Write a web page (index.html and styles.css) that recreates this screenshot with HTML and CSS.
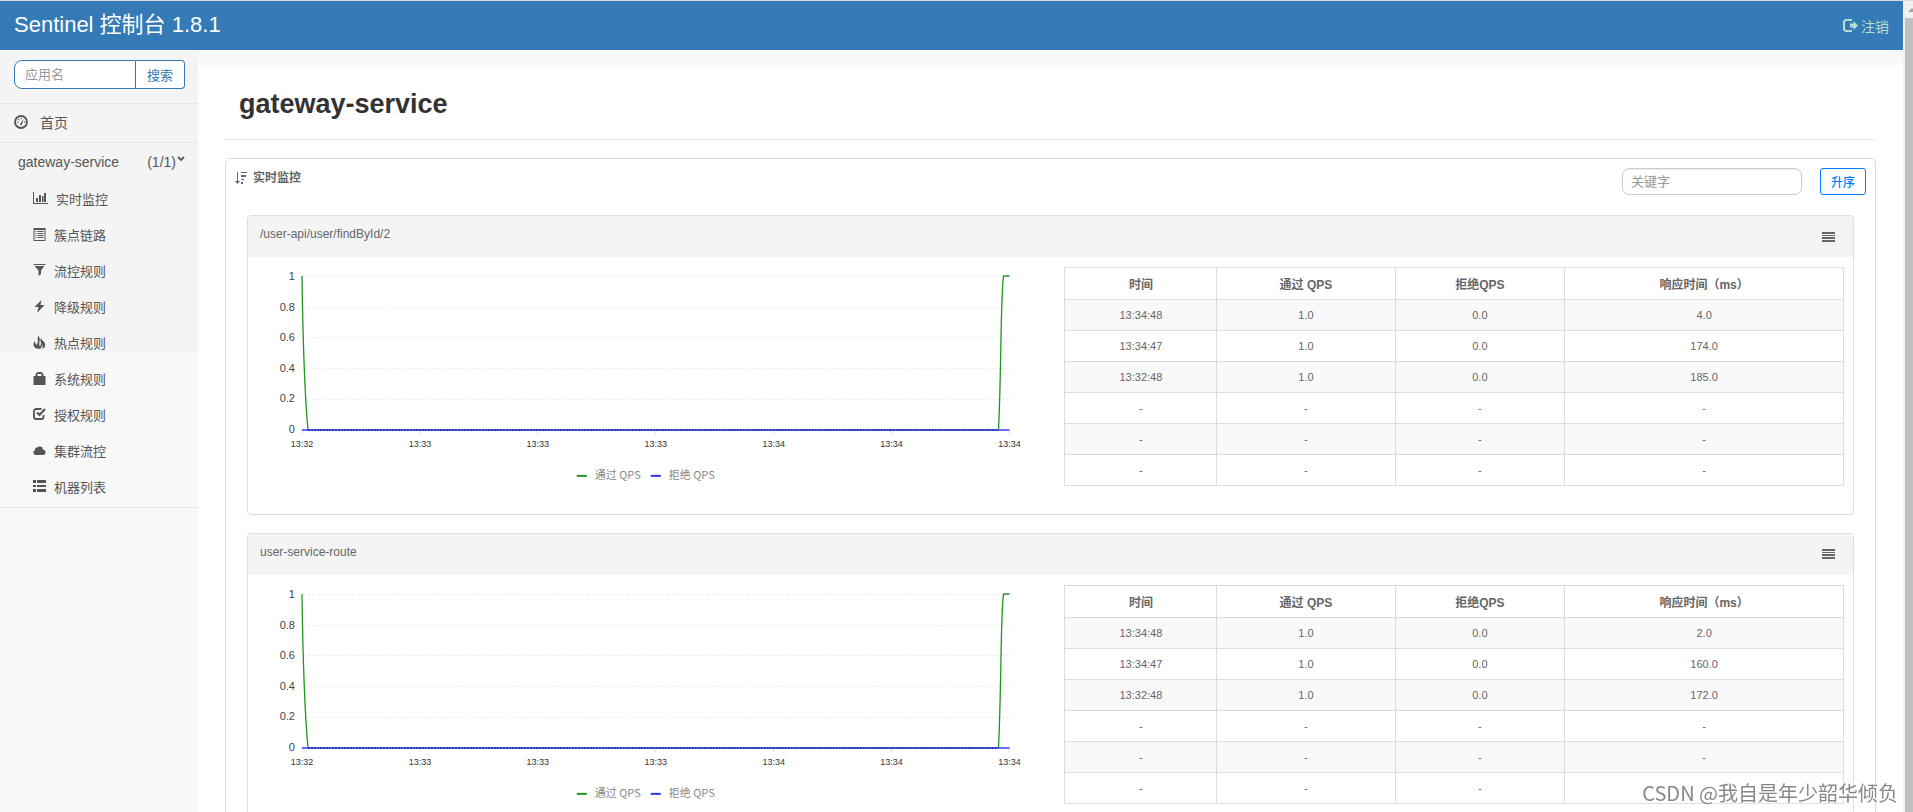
FILE: index.html
```html
<!DOCTYPE html>
<html lang="zh-CN">
<head>
<meta charset="utf-8">
<title>Sentinel 控制台</title>
<link rel="stylesheet" href="styles.css">
</head>
<body>
<svg class="defs" aria-hidden="true">
  <defs>
    <symbol id="i-dash" viewBox="0 0 14 14"><circle cx="7" cy="7" r="6" fill="none" stroke="currentColor" stroke-width="1.8"/><path d="M6 9 9.600 4 8 9.500a1 1 0 1 1-2-.5zM3 6.500h1.200v1.200H3zM4 4h1.200v1.200H4zM6.400 3h1.200v1.200H6.400zM10 6.500h1.200v1.200H10z" fill="currentColor"/></symbol>
    <symbol id="i-chart" viewBox="0 0 15 12"><path d="M0 0h1v11h14v1H0zM3 6h2v4H3zM6 3h2v7H6zM9 4h1.500v6H9zM11 1h2v9h-2z" fill="currentColor"/></symbol>
    <symbol id="i-list" viewBox="0 0 12 13"><path fill-rule="evenodd" d="M0 0h12v13H0zM1 2v10h10V2zM2 3h1v1H2zM4 3h6v1H4zM2 5h1v1H2zM4 5h6v1H4zM2 7h1v1H2zM4 7h6v1H4zM2 9h1v1H2zM4 9h6v1H4z" fill="currentColor"/></symbol>
    <symbol id="i-filter" viewBox="0 0 12 12"><path d="M0 0h12v1H0zM1 2h10L7.500 6.500V10L5 12V6.500z" fill="currentColor"/></symbol>
    <symbol id="i-flash" viewBox="0 0 10 13"><path d="M7 0 0 7h4L2.500 13 10 5H6z" fill="currentColor"/></symbol>
    <symbol id="i-fire" viewBox="0 0 12 13"><path d="M5 0c1.500 1.500 1.500 3.500 1 5.500-.4 2-.5 3.500.5 5C7.300 8.500 8 7.500 7 5c-.4-1.200 0-2.200.5-3 .3 1.800 1.500 2.200 2.700 3.500C12.500 8 12.300 12 8.500 12.800c.8-1.600 1-3 .3-4.300-.2 2-1.300 3-1.800 4.300H4C1.500 12.200 0 10.500 0 8.500 0 7 .6 6 1.300 5c.2 1.800.8 2.800 1.700 4 1.200-1.700 1.500-3 1.200-5C4 2.500 4.200 1 5 0z" fill="currentColor"/></symbol>
    <symbol id="i-bag" viewBox="0 0 12 13"><path fill-rule="evenodd" d="M2 4V2l2-2h4l2 2v2h2v9H0V4zM4 4h4V2H4z" fill="currentColor"/></symbol>
    <symbol id="i-check" viewBox="0 0 13 12"><path d="M8.500 1H3a2 2 0 0 0-2 2v6a2 2 0 0 0 2 2h5.500a2 2 0 0 0 2-2V7" fill="none" stroke="currentColor" stroke-width="1.800"/><path d="M4 4.500 6.500 7 12 1" fill="none" stroke="currentColor" stroke-width="2.200"/></symbol>
    <symbol id="i-cloud" viewBox="0 0 13 9"><path d="M2.500 9A2.500 2.500 0 0 1 2 4.200 2.300 2.300 0 0 1 4 1.500a3.500 3.500 0 0 1 6 2A2.800 2.800 0 0 1 10.500 9z" fill="currentColor"/></symbol>
    <symbol id="i-th" viewBox="0 0 13 12"><path d="M0 0h3v3H0zM4 0h9v3H4zM0 5h3v2H0zM4 5h9v2H4zM0 9h3v3H0zM4 9h9v3H4z" fill="currentColor"/></symbol>
    <symbol id="i-out" viewBox="0 0 15 13"><path d="M9 1H2.500L1 2.500v8L2.500 12H9" fill="none" stroke="currentColor" stroke-width="2"/><path d="M7 4.500h3.500V2L15 6.500 10.500 11V8.500H7z" fill="currentColor"/></symbol>
    <symbol id="i-sort" viewBox="0 0 12 12"><path d="M2 0h1v9h2l-2.500 3L0 9h2zM6 0h6v1H6zM6 3h5v2H6zM6 7h3v1H6zM6 10h2v2H6z" fill="currentColor"/></symbol>
    <symbol id="i-bars" viewBox="0 0 13 10"><path d="M0 0h13v2H0zM0 3h13v1H0zM0 5h13v2H0zM0 8h13v2H0z" fill="currentColor"/></symbol>
    <g id="grid">
      <path d="M44 9.500H753M44 40.500H753M44 70.500H753M44 101.500H753M44 132.500H753" class="grid-line"/>
      <path d="M44 163v4M162 163v4M280 163v4M398 163v4M516 163v4M634 163v4M752 163v4" class="tick"/>
      <path d="M44 9C45 80 46 120 50 163H741C744 100 743 30 746 9H752" class="pass"/>
      <path d="M44 163H752" class="block-line"/>
      <path d="M50 163H741" class="points"/>
      <g class="y-text">
        <text x="37" y="13">1</text><text x="37" y="44">0.8</text><text x="37" y="74">0.6</text><text x="37" y="105">0.4</text><text x="37" y="135">0.2</text><text x="37" y="166">0</text>
      </g>
      <g class="x-text">
        <text x="44" y="180">13:32</text><text x="162" y="180">13:33</text><text x="280" y="180">13:33</text><text x="398" y="180">13:33</text><text x="516" y="180">13:34</text><text x="634" y="180">13:34</text><text x="752" y="180">13:34</text>
      </g>
      <path d="M319 209h10" class="key-pass"/><path d="M393 209h10" class="key-block"/>
      <g class="legend"><text x="337" y="212">通过 QPS</text><text x="411" y="212">拒绝 QPS</text></g>
    </g>
  </defs>
</svg>
<div class="window">
  <div class="app">
    <header class="topbar">
      <a class="brand" href="#">Sentinel 控制台 1.8.1</a>
      <a class="logout" href="#"><svg width="15" height="13"><use href="#i-out"/></svg>注销</a>
    </header>
    <div class="columns">
      <nav class="sidebar">
        <div class="sidebar-top">
          <form class="search">
            <input type="text" placeholder="应用名" aria-label="应用名">
            <button type="button">搜索</button>
          </form>
          <a class="home" href="#"><svg width="14" height="14"><use href="#i-dash"/></svg>首页</a>
          <a class="service" href="#"><span>gateway-service</span><span class="count">(1/1)<svg width="8" height="6" viewBox="0 0 8 6"><path d="M1 1l3 3 3-3" fill="none" stroke="currentColor" stroke-width="1.800"/></svg></span></a>
        </div>
        <ul class="menu">
          <li><a href="#"><svg width="15" height="12"><use href="#i-chart"/></svg>实时监控</a></li>
          <li><a href="#"><svg width="13" height="13"><use href="#i-list"/></svg>簇点链路</a></li>
          <li><a href="#"><svg width="13" height="12"><use href="#i-filter"/></svg>流控规则</a></li>
          <li><a href="#"><svg width="13" height="13"><use href="#i-flash"/></svg>降级规则</a></li>
          <li><a href="#"><svg width="13" height="13"><use href="#i-fire"/></svg>热点规则</a></li>
          <li><a href="#"><svg width="13" height="13"><use href="#i-bag"/></svg>系统规则</a></li>
          <li><a href="#"><svg width="13" height="12"><use href="#i-check"/></svg>授权规则</a></li>
          <li><a href="#"><svg width="13" height="9"><use href="#i-cloud"/></svg>集群流控</a></li>
          <li><a href="#"><svg width="13" height="12"><use href="#i-th"/></svg>机器列表</a></li>
        </ul>
      </nav>
      <main class="content">
        <h1>gateway-service</h1>
        <section class="panel">
          <div class="panel-head">
            <h2><svg width="12" height="12"><use href="#i-sort"/></svg>实时监控</h2>
            <div class="tools">
              <input type="text" placeholder="关键字" aria-label="关键字">
              <button type="button">升序</button>
            </div>
          </div>
          <article class="card">
            <div class="card-head"><span>/user-api/user/findById/2</span><button type="button" aria-label="菜单"><svg width="13" height="10"><use href="#i-bars"/></svg></button></div>
            <div class="card-body">
              <svg class="plot" viewBox="0 0 807 236"><use href="#grid"/></svg>
              <table>
                <colgroup><col class="c1"><col class="c2"><col class="c3"><col class="c4"></colgroup>
                <thead><tr><th>时间</th><th>通过 QPS</th><th>拒绝QPS</th><th>响应时间（ms）</th></tr></thead>
                <tbody>
                  <tr><td>13:34:48</td><td>1.0</td><td>0.0</td><td>4.0</td></tr>
                  <tr><td>13:34:47</td><td>1.0</td><td>0.0</td><td>174.0</td></tr>
                  <tr><td>13:32:48</td><td>1.0</td><td>0.0</td><td>185.0</td></tr>
                  <tr><td>-</td><td>-</td><td>-</td><td>-</td></tr>
                  <tr><td>-</td><td>-</td><td>-</td><td>-</td></tr>
                  <tr><td>-</td><td>-</td><td>-</td><td>-</td></tr>
                </tbody>
              </table>
            </div>
          </article>
          <article class="card">
            <div class="card-head"><span>user-service-route</span><button type="button" aria-label="菜单"><svg width="13" height="10"><use href="#i-bars"/></svg></button></div>
            <div class="card-body">
              <svg class="plot" viewBox="0 0 807 236"><use href="#grid"/></svg>
              <table>
                <colgroup><col class="c1"><col class="c2"><col class="c3"><col class="c4"></colgroup>
                <thead><tr><th>时间</th><th>通过 QPS</th><th>拒绝QPS</th><th>响应时间（ms）</th></tr></thead>
                <tbody>
                  <tr><td>13:34:48</td><td>1.0</td><td>0.0</td><td>2.0</td></tr>
                  <tr><td>13:34:47</td><td>1.0</td><td>0.0</td><td>160.0</td></tr>
                  <tr><td>13:32:48</td><td>1.0</td><td>0.0</td><td>172.0</td></tr>
                  <tr><td>-</td><td>-</td><td>-</td><td>-</td></tr>
                  <tr><td>-</td><td>-</td><td>-</td><td>-</td></tr>
                  <tr><td>-</td><td>-</td><td>-</td><td>-</td></tr>
                </tbody>
              </table>
            </div>
          </article>
        </section>
      </main>
    </div>
  </div>
  <div class="scrollbar"><svg width="8" height="17" viewBox="0 0 8 17"><path d="M3 11l4-4 4 4z" fill="#a3a3a3"/></svg><div class="thumb"></div></div>
</div>
<div class="watermark">CSDN @我自是年少韶华倾负</div>
</body>
</html>
```

FILE: styles.css
```css
* { box-sizing: border-box; }
body {
  margin: 0;
  font-family: "Liberation Sans", "Noto Sans CJK SC", sans-serif;
  font-size: 14px;
  color: #555;
  background: #f8f8f8;
}
a { color: inherit; text-decoration: none; }
input, button { font-family: inherit; }
input::placeholder { color: #999; opacity: 1; }
svg { display: block; flex: none; }
.defs { position: absolute; width: 0; height: 0; }
.window {
  display: flex;
  height: 100vh;
  overflow: hidden;
  border-top: 1px solid #dcdcdc;
}
.app { flex: 1; min-width: 0; display: flex; flex-direction: column; }
.topbar {
  flex: none;
  display: flex;
  justify-content: space-between;
  height: 49px;
  padding: 0 14px;
  background: #337ab7;
}
.brand { font-size: 22px; line-height: 47px; color: #fff; }
.logout {
  display: flex;
  align-items: center;
  gap: 3px;
  font-size: 14px;
  color: #b5dfce;
}
.columns { flex: 1; display: flex; min-height: 0; }

.sidebar { flex: none; width: 198px; background: linear-gradient(#f4f4f4 302px, #f8f8f8 302px); }
.sidebar-top { display: flex; flex-direction: column; }
.search { display: flex; padding: 10px 13px 14px 14px; border-bottom: 1px solid #e5e5e5; }
.search input {
  flex: 1;
  min-width: 0;
  height: 29px;
  padding: 0 10px;
  font-size: 13px;
  border: 1px solid #337ab7;
  border-radius: 8px 0 0 8px;
  background: #fff;
}
.search button {
  width: 49px;
  height: 29px;
  padding: 0;
  font-size: 13px;
  color: #337ab7;
  border: 1px solid #337ab7;
  border-left: 0;
  border-radius: 0 4px 4px 0;
  background: #fff;
}
.home {
  display: flex;
  align-items: center;
  gap: 12px;
  height: 39px;
  padding: 0 14px 2px;
  border-bottom: 1px solid #e5e5e5;
}
.service {
  display: flex;
  justify-content: space-between;
  align-items: center;
  height: 38px;
  padding: 0 13px 0 18px;
}
.count { display: flex; gap: 1px; }
.count svg { margin-top: 2px; }
.menu { margin: 0; padding: 0 0 2px; list-style: none; border-bottom: 1px solid #e5e5e5; }
.menu a {
  display: flex;
  align-items: center;
  gap: 8px;
  height: 36px;
  padding: 0 0 2px 33px;
  font-size: 13px;
}

.content { flex: 1; min-width: 0; margin-top: 15px; padding: 0 27px; background: #fff; }
h1 {
  margin: 0 0 18px;
  padding: 24px 14px 19px;
  font-size: 27px;
  line-height: 31px;
  color: #333;
  border-bottom: 1px solid #e5e5e5;
}
.panel { border: 1px solid #ddd; border-radius: 5px; padding: 9px 9px 20px; color: #666; }
.panel-head { display: flex; justify-content: space-between; align-items: flex-start; height: 47px; }
h2 { display: flex; align-items: center; gap: 6px; margin: 0; font-size: 12px; line-height: 20px; }
.tools { display: flex; align-items: center; gap: 18px; }
.tools input {
  width: 180px;
  height: 27px;
  padding: 0 8px;
  font-size: 13px;
  border: 1px solid #ccc;
  border-radius: 7px;
  box-shadow: inset 0 1px 1px #eee;
}
.tools button {
  width: 46px;
  height: 27px;
  padding: 0;
  font-size: 12px;
  font-weight: 500;
  color: #007bff;
  border: 1px solid #007bff;
  border-radius: 3px;
  background: #fff;
}
.card { margin: 0 12px 18px; border: 1px solid #ddd; border-radius: 4px; }
.card-head {
  display: flex;
  justify-content: space-between;
  height: 41px;
  padding: 0 18px 0 12px;
  font-size: 12px;
  line-height: 36px;
  background: #f4f4f4;
  border-radius: 3px 3px 0 0;
}
.card-head button { padding: 0; border: 0; color: inherit; background: none; }
.card-body { display: grid; grid-template-columns: 807fr 780fr; align-items: start; padding: 10px 9px 11px 10px; }
.plot { width: 100%; height: auto; }
.grid-line { fill: none; stroke: #eee; stroke-dasharray: 3 2; }
.tick { stroke: #d5dcea; }
.pass { fill: none; stroke: #1f961f; stroke-width: 1.3; }
.block-line { stroke: #6a6af5; stroke-width: 2; }
.points { stroke: #2038b0; stroke-width: 2; stroke-dasharray: 2 1; }
.key-pass { stroke: #1f961f; stroke-width: 2; }
.key-block { stroke: #3333ff; stroke-width: 2; }
.y-text { font-size: 11px; text-anchor: end; fill: #444; }
.x-text { font-size: 9px; text-anchor: middle; fill: #333; }
.legend { font-family: "Noto Sans CJK SC", sans-serif; font-size: 11px; fill: #888; }

table { width: 100%; table-layout: fixed; border-collapse: collapse; text-align: center; }
.c1 { width: 19.5%; }
.c2 { width: 22.9%; }
.c3 { width: 21.8%; }
th, td { padding: 0; border: 1px solid #ddd; }
th { height: 32px; font-size: 12px; }
td { height: 31px; font-size: 11px; }
tbody tr:nth-child(odd) { background: #f9f9f9; }

.scrollbar { flex: none; display: flex; flex-direction: column; width: 10px; padding-left: 2px; background: #f1f1f1; }
.thumb { flex: 1; background: #c1c1c1; }
.watermark {
  position: fixed;
  right: 15px;
  bottom: 5px;
  font-family: "Noto Sans CJK SC", sans-serif;
  font-size: 20px;
  color: #888;
  text-shadow: 1px 1px 1px #fff;
}
```
